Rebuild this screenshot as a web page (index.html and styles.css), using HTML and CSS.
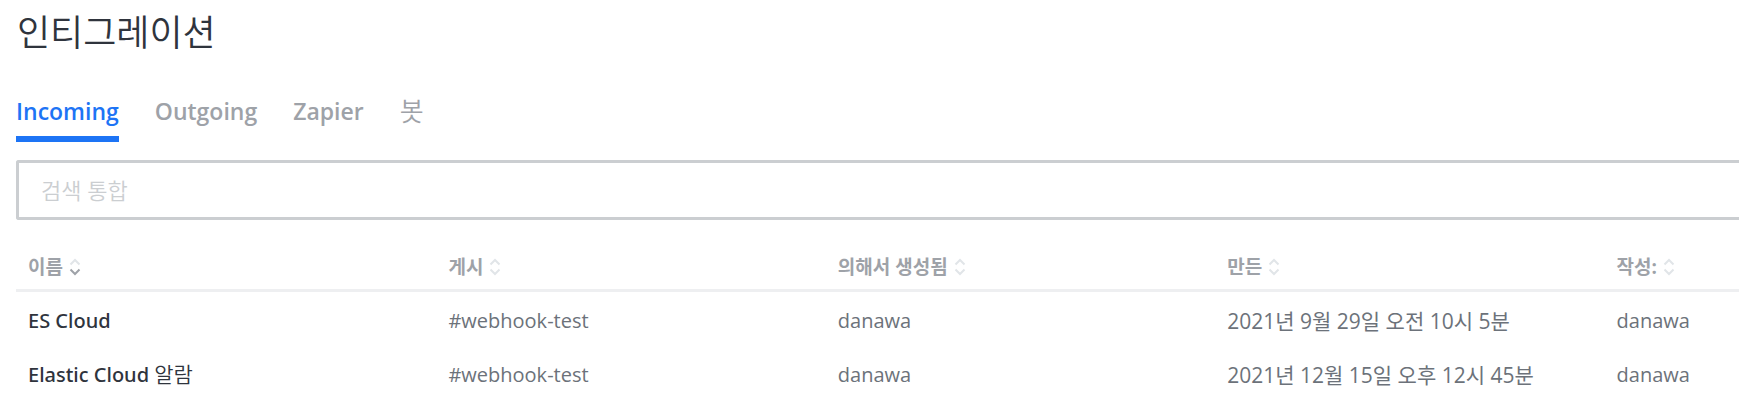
FILE: index.html
```html
<!DOCTYPE html>
<html lang="ko">
<head>
<meta charset="utf-8">
<title>인티그레이션</title>
<link rel="stylesheet" href="styles.css">
</head>
<body>
<svg class="defs" aria-hidden="true">
  <symbol id="sort" viewBox="0 0 12 18">
    <path class="up" d="M1.500 6.500 6 2l4.500 4.500"/>
    <path class="down" d="M1.500 11.500 6 16l4.500-4.500"/>
  </symbol>
</svg>
<main class="page">
  <h1 class="title">인티그레이션</h1>
  <nav class="tabs">
    <a class="tab active" href="#incoming">Incoming</a>
    <a class="tab" href="#outgoing">Outgoing</a>
    <a class="tab" href="#zapier">Zapier</a>
    <a class="tab bot" href="#bot">봇</a>
  </nav>
  <input class="search" type="text" placeholder="검색 통합" aria-label="검색 통합">
  <table class="list">
    <thead>
      <tr>
        <th class="name"><button class="sort sorted">이름<svg class="icon"><use href="#sort"/></svg></button></th>
        <th class="wide"><button class="sort">게시<svg class="icon"><use href="#sort"/></svg></button></th>
        <th class="wide"><button class="sort">의해서 생성됨<svg class="icon"><use href="#sort"/></svg></button></th>
        <th class="wide"><button class="sort">만든<svg class="icon"><use href="#sort"/></svg></button></th>
        <th><button class="sort">작성:<svg class="icon"><use href="#sort"/></svg></button></th>
      </tr>
    </thead>
    <tbody>
      <tr>
        <td class="strong">ES Cloud</td>
        <td>#webhook-test</td>
        <td>danawa</td>
        <td class="date">2021년 9월 29일 오전 10시 5분</td>
        <td>danawa</td>
      </tr>
      <tr>
        <td class="strong">Elastic Cloud <span class="light">알람</span></td>
        <td>#webhook-test</td>
        <td>danawa</td>
        <td class="date">2021년 12월 15일 오후 12시 45분</td>
        <td>danawa</td>
      </tr>
    </tbody>
  </table>
</main>
</body>
</html>
```
FILE: styles.css
```css
* { box-sizing: border-box; }
body {
  margin: 0;
  background: #fff;
  color: #2f343d;
  font-family: "Open Sans", "Noto Sans CJK KR", sans-serif;
  font-size: 20px;
  line-height: 30px;
}
.defs { display: none; }
.page {
  display: flex;
  flex-direction: column;
  padding: 9px 0 0 16px;
}
.title {
  margin: 0 0 33px;
  padding-left: 1px;
  font-size: 36px;
  font-weight: 350;
  line-height: 48px;
}
.tabs { display: flex; gap: 36px; margin-bottom: 18px; }
.tab {
  padding: 6px 0 10px;
  border-bottom: 6px solid transparent;
  color: #9ea2a8;
  font-size: 23px;
  font-weight: 600;
  text-decoration: none;
}
.tab.active { color: #1d74f5; border-color: #1d74f5; }
.tab.bot { font-size: 26px; font-weight: 350; }
.light { font-size: 21px; font-weight: 350; }
.search {
  width: 100%;
  height: 60px;
  padding: 0 22px;
  border: 3px solid #cbced1;
  border-right: 0;
  border-radius: 3px 0 0 3px;
  background: #fff;
  color: #2f343d;
  font: 350 22px/30px "Open Sans", "Noto Sans CJK KR", sans-serif;
}
.search::placeholder { color: #cbced1; opacity: 1; }
.list {
  width: 100%;
  margin-top: 24px;
  border-collapse: separate;
  border-spacing: 0;
  table-layout: fixed;
}
th, td { padding: 0 0 0 12px; text-align: left; white-space: nowrap; }
th { height: 48px; padding-top: 1px; border-bottom: 3px solid #eeeff1; }
td { height: 54px; padding-top: 3px; color: #6c727a; }
.name { width: 24.4%; }
.wide { width: 22.6%; }
.strong { color: #2f343d; font-family: "Noto Sans", "Noto Sans CJK KR", sans-serif; font-weight: 500; }
.date { font-size: 21px; }
.sort {
  display: flex;
  align-items: center;
  gap: 6px;
  padding: 0;
  border: 0;
  background: none;
  color: #9ea2a8;
  font: 700 19px/24px "Open Sans", "Noto Sans CJK KR", sans-serif;
}
.icon {
  width: 12px;
  height: 18px;
  fill: none;
  stroke: #e1e5e8;
  stroke-width: 2;
  --down: #e1e5e8;
}
.sorted .icon { --down: #9ea2a8; }
.down { stroke: var(--down); }
```
